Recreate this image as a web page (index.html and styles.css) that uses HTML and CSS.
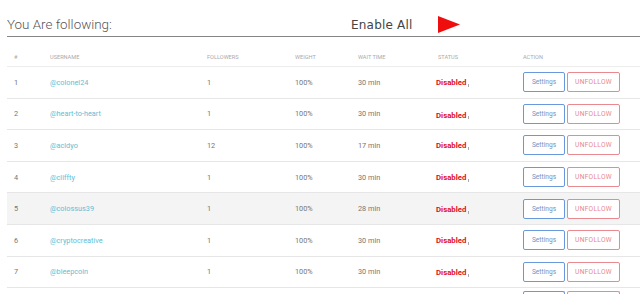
FILE: index.html
```html
<!DOCTYPE html>
<html>
<head>
<meta charset="utf-8">
<link rel="stylesheet" href="styles.css">
</head>
<body>
<div class="page">
  <div class="topbar">
    <h1 class="title">You Are following:</h1>
    <span class="enable">Enable All</span>
    <svg class="play" width="22" height="17" viewBox="0 0 22 17"><polygon points="0,0 22,8.5 0,17" fill="#f00d0d"/></svg>
  </div>
  <table class="list">
    <thead>
      <tr><th>#</th><th>USERNAME</th><th>FOLLOWERS</th><th>WEIGHT</th><th>WAIT TIME</th><th>STATUS</th><th>ACTION</th></tr>
    </thead>
    <tbody>
      <tr><td>1</td><td class="user">@colonel24</td><td>1</td><td>100%</td><td>30 min</td><td><span class="dis">Disabled</span><span class="tick"></span></td><td class="act"><button class="set">Settings</button><button class="unf">UNFOLLOW</button></td></tr>
      <tr><td>2</td><td class="user">@heart-to-heart</td><td>1</td><td>100%</td><td>30 min</td><td><span class="dis low">Disabled</span><span class="tick"></span></td><td class="act"><button class="set">Settings</button><button class="unf">UNFOLLOW</button></td></tr>
      <tr><td>3</td><td class="user">@acidyo</td><td>12</td><td>100%</td><td>17 min</td><td><span class="dis">Disabled</span><span class="tick"></span></td><td class="act"><button class="set">Settings</button><button class="unf">UNFOLLOW</button></td></tr>
      <tr><td>4</td><td class="user">@cliffty</td><td>1</td><td>100%</td><td>30 min</td><td><span class="dis">Disabled</span><span class="tick"></span></td><td class="act"><button class="set">Settings</button><button class="unf">UNFOLLOW</button></td></tr>
      <tr class="hover"><td>5</td><td class="user">@colossus39</td><td>1</td><td>100%</td><td>28 min</td><td><span class="dis">Disabled</span><span class="tick"></span></td><td class="act"><button class="set">Settings</button><button class="unf">UNFOLLOW</button></td></tr>
      <tr><td>6</td><td class="user">@cryptocreative</td><td>1</td><td>100%</td><td>30 min</td><td><span class="dis">Disabled</span><span class="tick"></span></td><td class="act"><button class="set">Settings</button><button class="unf">UNFOLLOW</button></td></tr>
      <tr><td>7</td><td class="user">@bleepcoin</td><td>1</td><td>100%</td><td>30 min</td><td><span class="dis">Disabled</span><span class="tick"></span></td><td class="act"><button class="set">Settings</button><button class="unf">UNFOLLOW</button></td></tr>
      <tr class="partial"><td></td><td></td><td></td><td></td><td></td><td></td><td class="act top"><span class="set stub"></span><span class="unf stub"></span></td></tr>
    </tbody>
  </table>
</div>
</body>
</html>
```
FILE: styles.css
```css
html, body {
  margin: 0;
  padding: 0;
  background: #fff;
  overflow: hidden;
}
.page {
  padding-left: 7px;
  font-family: Roboto, "Liberation Sans", sans-serif;
}
.topbar {
  display: flex;
  align-items: center;
  height: 36px;
  border-bottom: 1px solid #858585;
}
.title {
  margin: 0;
  font-family: Roboto, sans-serif;
  font-weight: 300;
  font-size: 13.4px;
  color: #555;
  width: 344px;
  padding-top: 13px;
}
.enable {
  font-family: "DejaVu Sans", sans-serif;
  font-size: 12px;
  color: #444;
  letter-spacing: 0.2px;
  width: 87px;
  padding-top: 13px;
}
.play {
  margin-top: 13px;
}
.list {
  border-collapse: collapse;
  margin-top: 11px;
  width: 633px;
  table-layout: fixed;
}
.list th, .list td {
  text-align: left;
  padding: 0 0 0 7px;
}
.list th {
  font-size: 5.6px;
  font-weight: 400;
  color: #aaa;
  height: 18px;
  border-bottom: 1px solid #ececec;
}
.list th:nth-child(1) { width: 29px; }
.list th:nth-child(2) { width: 150px; }
.list th:nth-child(3) { width: 81px; }
.list th:nth-child(4) { width: 56px; }
.list th:nth-child(5) { width: 73px; }
.list th:nth-child(6) { width: 78px; }
.list th:nth-child(7) { width: 117px; }
.list td {
  height: 30.6px;
  font-size: 7.3px;
  color: #767676;
  border-bottom: 1px solid #e6e6e6;
}
.list tr.hover td { background: #f4f4f4; }
.list td.user { color: #64bdd4; }
.list tr.partial td { border-bottom: 0; vertical-align: top; }
.dis {
  color: #e0101b;
  font-weight: 700;
  font-size: 7.8px;
  position: relative;
  top: 1px;
  margin-left: -2px;
}
.dis.low { top: 2px; }
.tick {
  display: inline-block;
  width: 1px;
  height: 3px;
  background: #aaa;
  margin-left: 2px;
  vertical-align: -3px;
}
.act {
  white-space: nowrap;
}
.act.top { padding-top: 3px; }
.act button, .stub {
  font-family: Roboto, sans-serif;
  font-size: 6.6px;
  height: 20px;
  background: #fff;
  border-radius: 2px;
  padding: 0;
  vertical-align: middle;
  cursor: pointer;
  box-sizing: border-box;
}
.stub {
  display: inline-block;
  height: 10px;
  border-bottom: 0 !important;
  vertical-align: top;
}
.set {
  width: 42px;
  border: 1px solid #6a98dc;
  color: #7390c0;
  margin-right: 2px;
}
.unf {
  width: 53px;
  border: 1px solid #e98a90;
  color: #e8868c;
  letter-spacing: 0.3px;
}
```
